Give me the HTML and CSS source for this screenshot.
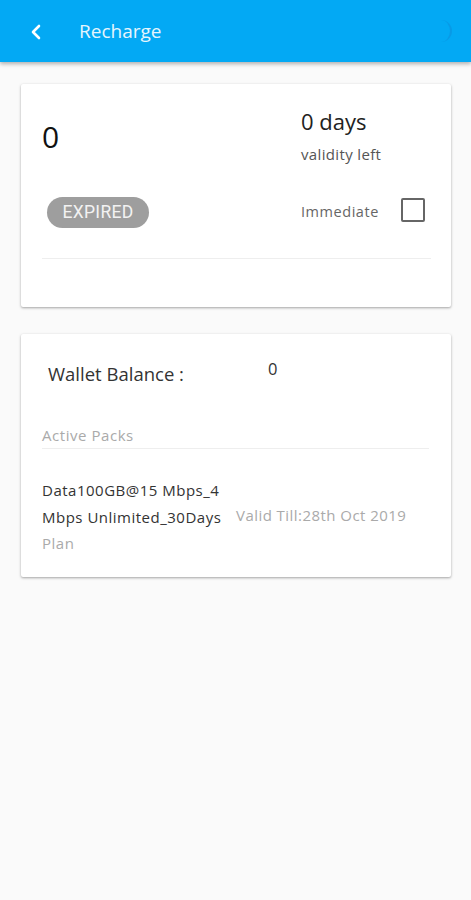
FILE: index.html
```html
<!DOCTYPE html>
<html>
<head>
<meta charset="utf-8">
<link rel="stylesheet" href="styles.css">
</head>
<body>
<header class="appbar">
  <svg class="back" width="12" height="16" viewBox="0 0 12 16"><path d="M9 2 L3 8 L9 14" fill="none" stroke="#fff" stroke-width="2.6" stroke-linecap="round" stroke-linejoin="round"/></svg>
  <span class="title">Recharge</span>
  <span class="ghost"></span>
</header>
<main class="content">
  <section class="card card-status">
    <div class="status-top">
      <div class="amount">0</div>
      <div class="validity">
        <div class="days">0 days</div>
        <div class="vlabel">validity left</div>
      </div>
    </div>
    <div class="status-row">
      <span class="pill">EXPIRED</span>
      <div class="immediate">
        <span class="imm-label">Immediate</span>
        <span class="checkbox"></span>
      </div>
    </div>
    <div class="divider"></div>
  </section>
  <section class="card card-wallet">
    <div class="wallet-row">
      <span class="wallet-label">Wallet Balance :</span>
      <span class="wallet-value">0</span>
    </div>
    <div class="packs-head">Active Packs</div>
    <div class="pack">
      <div class="pack-name">
        <div class="pack-line">Data100GB@15 Mbps_4</div>
        <div class="pack-line">Mbps Unlimited_30Days</div>
        <div class="pack-type">Plan</div>
      </div>
      <div class="pack-valid">Valid Till:28th Oct 2019</div>
    </div>
  </section>
</main>
</body>
</html>
```
FILE: styles.css
```css
* { box-sizing: border-box; }
html, body { margin: 0; padding: 0; }
body {
  background: #fafafa;
  font-family: "Open Sans", "Lato", sans-serif;
  width: 471px;
  height: 900px;
  overflow: hidden;
}
.appbar {
  height: 62px;
  background: #03a9f4;
  display: flex;
  align-items: center;
  padding-left: 30px;
  box-shadow: 0 2px 4px rgba(0,0,0,0.3);
  position: relative;
}
.back { margin-top: 2px; flex: none; }
.title {
  color: #e6f5fd;
  font-size: 19px;
  line-height: 1;
  margin-left: 37px;
}
.ghost {
  position: absolute;
  right: 19px;
  top: 20px;
  width: 12px;
  height: 22px;
  border-right: 2px solid rgba(20,120,200,0.3);
  border-radius: 0 11px 11px 0;
}
.content {
  padding: 22px 20px 0 21px;
  display: flex;
  flex-direction: column;
  gap: 27px;
}
.card {
  background: #fff;
  box-shadow: 0 1px 3px rgba(0,0,0,0.25), 0 1px 2px rgba(0,0,0,0.12);
  border-radius: 2px;
}
.card-status {
  height: 223px;
  padding: 26px 20px 0 21px;
}
.status-top {
  display: flex;
  justify-content: space-between;
  align-items: flex-start;
}
.amount {
  font-size: 30px;
  line-height: 1;
  color: #111;
  margin-top: 12px;
}
.validity { width: 130px; }
.days { font-size: 22px; line-height: 1; color: #222; }
.vlabel {
  font-size: 15px;
  line-height: 1;
  color: #555;
  letter-spacing: 0.35px;
  margin-top: 15px;
}
.status-row {
  display: flex;
  justify-content: space-between;
  align-items: center;
  margin-top: 35px;
  padding-left: 5px;
}
.pill {
  background: #9e9e9e;
  color: #f2f2f2;
  font-family: "Roboto", sans-serif;
  font-size: 17.5px;
  letter-spacing: 0.3px;
  border-radius: 16px;
  height: 31px;
  line-height: 31px;
  width: 102px;
  text-align: center;
}
.immediate {
  display: flex;
  align-items: center;
  width: 130px;
}
.imm-label {
  font-size: 14.5px;
  line-height: 1;
  letter-spacing: 0.55px;
  color: #666;
  width: 100px;
}
.checkbox {
  width: 24px;
  height: 24px;
  border: 2.5px solid #666;
  border-radius: 2px;
  margin-bottom: 5px;
}
.divider {
  height: 1px;
  background: #eee;
  margin-top: 30px;
}
.card-wallet {
  height: 243px;
  padding: 27px 22px 0 21px;
}
.wallet-row {
  display: flex;
  align-items: flex-start;
}
.wallet-label {
  font-size: 18.5px;
  line-height: 1;
  color: #333;
  width: 226px;
  padding-left: 6px;
  margin-top: 3.5px;
}
.wallet-value {
  font-size: 16.5px;
  line-height: 1;
  color: #333;
}
.packs-head {
  font-size: 15px;
  line-height: 1;
  letter-spacing: 0.55px;
  color: #aaa;
  margin-top: 45px;
  padding-bottom: 5px;
  border-bottom: 1px solid #eee;
}
.pack {
  display: flex;
  align-items: center;
  margin-top: 28px;
}
.pack-name { width: 194px; flex: none; }
.pack-line {
  font-size: 15px;
  line-height: 26.5px;
  letter-spacing: 0.5px;
  color: #333;
  white-space: nowrap;
}
.pack-type {
  font-size: 15px;
  line-height: 26.5px;
  letter-spacing: 0.5px;
  color: #aaa;
}
.pack-valid {
  font-size: 15px;
  line-height: 1;
  letter-spacing: 0.45px;
  color: #aaa;
  margin-top: -2px;
  white-space: nowrap;
}
```
